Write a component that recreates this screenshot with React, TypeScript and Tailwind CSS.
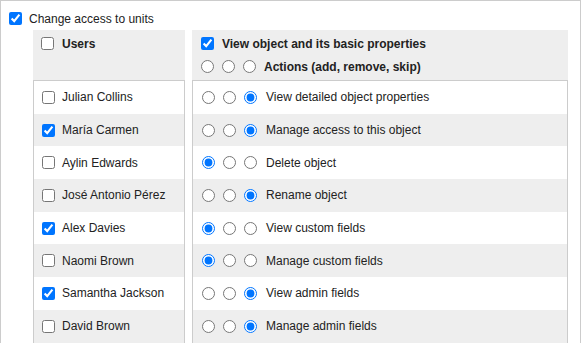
const users = [
  { name: 'Julian Collins', checked: false },
  { name: 'María Carmen', checked: true },
  { name: 'Aylin Edwards', checked: false },
  { name: 'José Antonio Pérez', checked: false },
  { name: 'Alex Davies', checked: true },
  { name: 'Naomi Brown', checked: false },
  { name: 'Samantha Jackson', checked: true },
  { name: 'David Brown', checked: false },
];

const permissions = [
  { label: 'View detailed object properties', value: 2 },
  { label: 'Manage access to this object', value: 2 },
  { label: 'Delete object', value: 0 },
  { label: 'Rename object', value: 2 },
  { label: 'View custom fields', value: 0 },
  { label: 'Manage custom fields', value: 0 },
  { label: 'View admin fields', value: 2 },
  { label: 'Manage admin fields', value: 2 },
];

const box = 'w-[13px] h-[13px] m-0 shrink-0';

const App = () => {
  return (
    <div className="w-[581px] h-[343px] overflow-hidden bg-white font-['Liberation_Sans',Arial,sans-serif] text-[12px] text-[#222]">
      <div className="border border-[#ccc] pl-[8px] pt-[11px] pr-[12px]">
        {/* Title */}
        <label className="flex items-center gap-[7px] h-[13px]">
          <input type="checkbox" defaultChecked className={box} />
          <span>Change access to units</span>
        </label>

        <div className="flex gap-[7px] mt-[5px] ml-[24px]">
          {/* Users column */}
          <div className="w-[152px] shrink-0">
            <div className="h-[50px] bg-[#eee] px-[8px] pt-[7px]">
              <label className="flex items-center gap-[8px] h-[13px] font-bold">
                <input type="checkbox" className={box} />
                <span>Users</span>
              </label>
            </div>
            <div className="border border-[#ccc]">
              {users.map((u, i) => (
                <label
                  key={u.name}
                  className={`flex items-center gap-[7px] h-[32.7px] pl-[8px] ${i % 2 === 1 ? 'bg-[#eee]' : 'bg-white'}`}
                >
                  <input type="checkbox" defaultChecked={u.checked} className={box} />
                  <span>{u.name}</span>
                </label>
              ))}
            </div>
          </div>

          {/* Permissions column */}
          <div className="flex-1">
            <div className="h-[50px] bg-[#eee] pl-[9px] pt-[7px]">
              <label className="flex items-center gap-[8px] h-[13px] font-bold">
                <input type="checkbox" defaultChecked className={box} />
                <span>View object and its basic properties</span>
              </label>
              <div className="flex items-center gap-[8px] h-[13px] mt-[10px] font-bold">
                <input type="radio" name="actions" className={box} />
                <input type="radio" name="actions" className={box} />
                <input type="radio" name="actions" className={box} />
                <span>Actions (add, remove, skip)</span>
              </div>
            </div>
            <div className="border border-[#ccc]">
              {permissions.map((p, i) => (
                <div
                  key={p.label}
                  className={`flex items-center gap-[8px] h-[32.7px] pl-[9px] ${i % 2 === 1 ? 'bg-[#eee]' : 'bg-white'}`}
                >
                  {[0, 1, 2].map((v) => (
                    <input
                      key={v}
                      type="radio"
                      name={`perm-${i}`}
                      defaultChecked={p.value === v}
                      className={box}
                    />
                  ))}
                  <span className="ml-[1px]">{p.label}</span>
                </div>
              ))}
            </div>
          </div>
        </div>
      </div>
    </div>
  );
};

export default App;
